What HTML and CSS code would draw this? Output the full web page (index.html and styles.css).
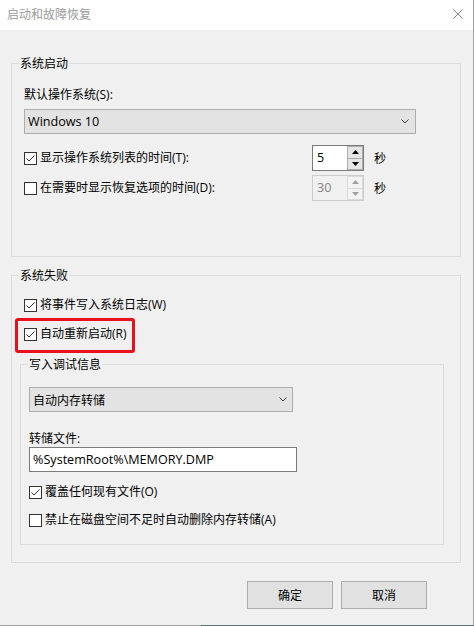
FILE: index.html
```html
<!DOCTYPE html>
<html lang="zh-CN">
<head>
<meta charset="utf-8">
<title>启动和故障恢复</title>
<link rel="stylesheet" href="styles.css">
</head>
<body>
<div class="window">
  <div class="titlebar">
    <span class="title">启动和故障恢复</span>
    <svg class="close" width="10" height="10" viewBox="0 0 10 10"><path d="M0.5 0.5 L9.5 9.5 M9.5 0.5 L0.5 9.5" stroke="#8a8a8a" stroke-width="1" fill="none"/></svg>
  </div>
  <div class="content">
    <fieldset class="group g1">
      <legend>系统启动</legend>
      <div class="gbody gbody1">
        <div class="label lab1">默认操作系统(S):</div>
        <div class="select wide">
          <span class="latin">Windows 10</span>
          <svg class="chev" width="8" height="5" viewBox="0 0 8 5"><polyline points="0.5,0.5 4,4 7.5,0.5" fill="none" stroke="#404040" stroke-width="1"/></svg>
        </div>
        <div class="spinrow r1">
          <div class="check">
            <svg class="box" width="13" height="13" viewBox="0 0 13 13"><rect x="0.5" y="0.5" width="12" height="12" fill="#fff" stroke="#333"/><polyline points="2.5,6.5 5,9 10.5,3.5" fill="none" stroke="#333" stroke-width="1"/></svg>
            <span>显示操作系统列表的时间(T):</span>
          </div>
          <div class="spin">
            <span class="val">5</span>
            <div class="btns">
              <span class="sbtn"><svg width="7" height="4" viewBox="0 0 7 4"><polygon points="0,4 3.5,0 7,4" fill="#000"/></svg></span>
              <span class="sbtn"><svg width="7" height="4" viewBox="0 0 7 4"><polygon points="0,0 7,0 3.5,4" fill="#000"/></svg></span>
            </div>
          </div>
          <span>秒</span>
        </div>
        <div class="spinrow r2">
          <div class="check">
            <svg class="box" width="13" height="13" viewBox="0 0 13 13"><rect x="0.5" y="0.5" width="12" height="12" fill="#fff" stroke="#333"/></svg>
            <span>在需要时显示恢复选项的时间(D):</span>
          </div>
          <div class="spin dis">
            <span class="val">30</span>
            <div class="btns">
              <span class="sbtn"><svg width="7" height="4" viewBox="0 0 7 4"><polygon points="0,4 3.5,0 7,4" fill="#a0a0a0"/></svg></span>
              <span class="sbtn"><svg width="7" height="4" viewBox="0 0 7 4"><polygon points="0,0 7,0 3.5,4" fill="#a0a0a0"/></svg></span>
            </div>
          </div>
          <span>秒</span>
        </div>
      </div>
    </fieldset>

    <fieldset class="group g2">
      <legend>系统失败</legend>
      <div class="gbody gbody2">
        <div class="check c1">
          <svg class="box" width="13" height="13" viewBox="0 0 13 13"><rect x="0.5" y="0.5" width="12" height="12" fill="#fff" stroke="#333"/><polyline points="2.5,6.5 5,9 10.5,3.5" fill="none" stroke="#333" stroke-width="1"/></svg>
          <span>将事件写入系统日志(W)</span>
        </div>
        <div class="check c2">
          <svg class="box" width="13" height="13" viewBox="0 0 13 13"><rect x="0.5" y="0.5" width="12" height="12" fill="#fff" stroke="#333"/><polyline points="2.5,6.5 5,9 10.5,3.5" fill="none" stroke="#333" stroke-width="1"/></svg>
          <span>自动重新启动(R)</span>
          <span class="highlight"></span>
        </div>
        <fieldset class="group g3">
          <legend>写入调试信息</legend>
          <div class="gbody gbody3">
            <div class="select narrow">
              <span>自动内存转储</span>
              <svg class="chev" width="8" height="5" viewBox="0 0 8 5"><polyline points="0.5,0.5 4,4 7.5,0.5" fill="none" stroke="#404040" stroke-width="1"/></svg>
            </div>
            <div class="label lab2">转储文件:</div>
            <div class="field latin">%SystemRoot%\MEMORY.DMP</div>
            <div class="check c3">
              <svg class="box" width="13" height="13" viewBox="0 0 13 13"><rect x="0.5" y="0.5" width="12" height="12" fill="#fff" stroke="#333"/><polyline points="2.5,6.5 5,9 10.5,3.5" fill="none" stroke="#333" stroke-width="1"/></svg>
              <span>覆盖任何现有文件(O)</span>
            </div>
            <div class="check c4">
              <svg class="box" width="13" height="13" viewBox="0 0 13 13"><rect x="0.5" y="0.5" width="12" height="12" fill="#fff" stroke="#333"/></svg>
              <span>禁止在磁盘空间不足时自动删除内存转储(A)</span>
            </div>
          </div>
        </fieldset>
      </div>
    </fieldset>
  </div>
  <div class="footer">
    <button class="btn" type="button">确定</button>
    <button class="btn" type="button">取消</button>
  </div>
</div>
<div class="bottom-edge"></div>
</body>
</html>
```

FILE: styles.css
```css
* { box-sizing: border-box; }
html, body { margin: 0; padding: 0; }
body {
  width: 474px;
  height: 626px;
  overflow: hidden;
  background: #58706f;
  font-family: "Open Sans", "Noto Sans CJK SC", sans-serif;
  font-size: 12px;
  color: #000;
}
.window {
  width: 474px;
  height: 625px;
  background: #f0f0f0;
  border-right: 1px solid #a3a3a3;
}
.titlebar {
  height: 30px;
  background: #fff;
  display: flex;
  justify-content: space-between;
  padding: 0 10px 0 7px;
}
.title { line-height: 30px; color: #999; }
.close { margin-top: 9px; }
.content { padding-left: 11px; }

.group {
  margin: 0;
  padding: 0;
  min-width: 0;
  border: 1px solid #dcdcdc;
}
.group legend {
  padding: 0 1px;
  margin-left: 7px;
  line-height: 15px;
}
.g1 { width: 450px; margin-top: 26px; }
.g2 { width: 450px; margin-top: 11px; }
.g3 { width: 424px; margin: 15px 0 0 -4px; }

.gbody1 { padding: 0 12px 55px; }
.gbody2 { padding: 0 12px 17px; }
.gbody3 { padding: 0 8px 16px; }

.label { line-height: 16px; }
.lab1 { margin-top: 16px; }
.lab2 { margin-top: 19px; }

.latin { font-size: 12.6px; }

.select {
  display: flex;
  align-items: center;
  justify-content: space-between;
  height: 25px;
  border: 1px solid #adadad;
  background: #e3e3e3;
  padding: 0 6px 0 3px;
}
.select.wide { width: 392px; margin-top: 6px; }
.select.narrow { width: 264px; margin-top: 15px; padding-right: 5px; }

.spinrow {
  display: grid;
  grid-template-columns: 278px 52px auto;
  column-gap: 10px;
  align-items: center;
}
.r1 { margin-top: 11px; }
.r2 { margin-top: 4px; }

.spin {
  height: 26px;
  border: 1px solid #7a7a7a;
  background: #fff;
  display: flex;
}
.spin .val {
  flex: 1;
  padding-left: 4px;
  line-height: 24px;
  font-size: 12.6px;
}
.btns {
  width: 16px;
  margin-left: 1px;
  display: flex;
  flex-direction: column;
}
.sbtn {
  flex: 1;
  display: flex;
  align-items: center;
  justify-content: center;
  background: #e5e5e5;
  border: 1px solid #adadad;
}
.sbtn + .sbtn { border-top: 0; }
.spin.dis { border-color: #cccccc; background: #f0f0f0; color: #838383; }
.spin.dis .sbtn { background: #f3f3f3; border-color: #dadada; }

.check {
  display: flex;
  align-items: center;
  gap: 3px;
  height: 16px;
  line-height: 16px;
}
.box { flex: none; }
.c1 { margin-top: 14px; }
.c2 { margin-top: 13px; position: relative; }
.c3 { margin-top: 12px; }
.c4 { margin-top: 12px; }

.highlight {
  position: absolute;
  left: -9px;
  top: -8px;
  width: 120px;
  height: 35px;
  border: 3px solid #e8111b;
  border-radius: 3px;
}

.field {
  width: 268px;
  height: 25px;
  border: 1px solid #7a7a7a;
  background: #fff;
  padding-left: 3px;
  line-height: 23px;
}

.footer {
  display: flex;
  gap: 8px;
  margin-top: 18px;
  padding-left: 247px;
}
.btn {
  width: 86px;
  height: 28px;
  margin: 0;
  padding: 0;
  border: 1px solid #adadad;
  background: #e1e1e1;
  font-family: inherit;
  font-size: 12px;
  color: #000;
}
.bottom-edge {
  width: 201px;
  height: 1px;
  background: #a0a0a0;
}
```
